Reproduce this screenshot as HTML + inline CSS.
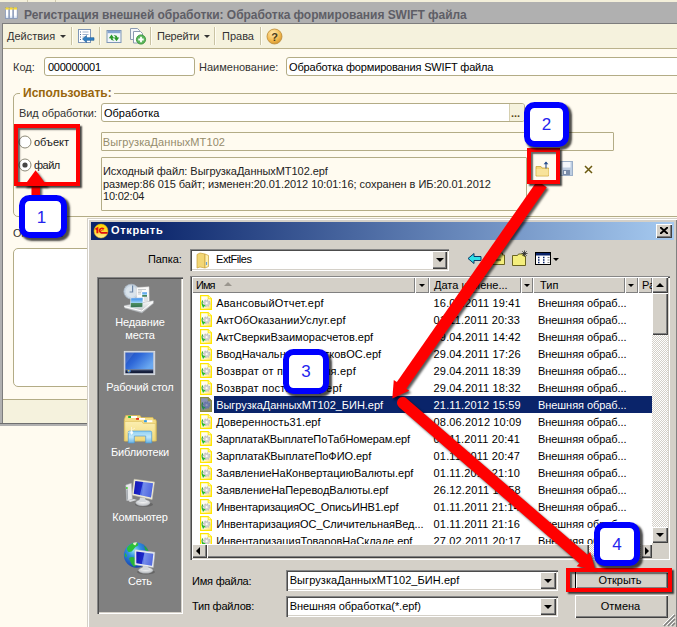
<!DOCTYPE html>
<html><head><meta charset="utf-8">
<style>
*{box-sizing:border-box;margin:0;padding:0}
html,body{width:677px;height:627px;overflow:hidden;background:#fffbf0}
body{font-family:"Liberation Sans",sans-serif;font-size:11px;color:#000;position:relative}
.a{position:absolute;white-space:nowrap}
.t{position:absolute;white-space:nowrap;line-height:13px;height:13px}
/* 1C form */
#top{left:0;top:0;width:677px;height:2px;background:#f3efda}
#tbar{left:0;top:2px;width:677px;height:21px;background:#b0b0b0}
#tbarb{left:0;top:23px;width:677px;height:1px;background:#7d7d7d}
#tool{left:3px;top:24px;width:674px;height:24px;background:#f5f2dd}
#toolb{left:3px;top:48px;width:674px;height:1px;background:#bab28c}
#lb1{left:0;top:3px;width:2px;height:422px;background:#b0b0b0}
#lb2{left:2px;top:23px;width:1px;height:401px;background:#7d7d7d}
.sep{position:absolute;top:27px;width:1px;height:18px;background:#c9c3a3;box-shadow:1px 0 0 #fffdf3}
.inp{position:absolute;border:1px solid #b3ac86;border-radius:3px;background:#fff}
.ro{background:#fffbf0}
.gl{position:absolute;background:#b3ac86}
/* dialog */
#dlg{left:87px;top:218px;width:591px;height:425px;background:#d4d0c8;box-shadow:inset 1px 1px 0 #d4d0c8,inset 2px 2px 0 #fff,inset -1px -1px 0 #404040,inset -2px -2px 0 #808080}
#dt{left:91px;top:222px;width:583px;height:18px;background:linear-gradient(90deg,#0a246a 0%,#0a246a 8%,#a6caf0 100%)}
.sunk{position:absolute;box-shadow:inset 1px 1px 0 #868686,inset 2px 2px 0 #4c4c4c,inset -1px -1px 0 #fff,inset -2px -2px 0 #d4d0c8}
.btn{position:absolute;background:#d4d0c8;box-shadow:inset 1px 1px 0 #fff,inset -1px -1px 0 #404040,inset -2px -2px 0 #808080}
.hd{position:absolute;background:#d4d0c8;top:277px;height:16px;box-shadow:inset 1px 1px 0 #fff,inset -1px -1px 0 #808080}
.w{color:#fff}
.dn{position:absolute;width:0;height:0;border-left:4px solid transparent;border-right:4px solid transparent;border-top:4px solid #000}
.dns{position:absolute;width:0;height:0;border-left:3px solid transparent;border-right:3px solid transparent;border-top:3px solid #000}
/* annotations */
.rb{position:absolute;border:4.500px solid #f00;box-shadow:2px 2px 1.500px rgba(0,0,0,.7),inset 2px 2px 1.500px rgba(0,0,0,.6)}
.co{position:absolute;border:6px solid #00f;border-radius:10.500px;background:#fff;box-shadow:2.500px 2.500px 2px rgba(0,0,0,.7);color:#2424ee;font-size:17px;text-align:center}
</style></head><body>

<!-- ===== 1C form ===== -->
<div class="a" id="top"></div><div class="a" style="left:27px;top:0;width:1px;height:2px;background:#cfc9ae"></div><div class="a" style="left:55px;top:0;width:1px;height:2px;background:#cfc9ae"></div>
<div class="a" id="tbar"></div>
<div class="a" id="tbarb"></div>
<div class="a" id="tool"></div>
<div class="a" id="toolb"></div>
<div class="a" id="lb1"></div>
<div class="a" id="lb2"></div>

<div class="t" style="left:24px;top:9px;font-weight:bold;font-size:12px;color:#5e5e66;letter-spacing:-0.04px">Регистрация внешней обработки: Обработка формирования SWIFT файла</div>

<div class="t" style="left:7px;top:30px;color:#333">Действия</div>
<div class="t" style="left:157px;top:30px;color:#333;letter-spacing:-0.2px">Перейти</div>
<div class="t" style="left:222px;top:30px;color:#333">Права</div>

<!--FORM-START-->
<!-- toolbar bits -->
<div class="dns" style="left:60px;top:35px;border-top-color:#333"></div>
<div class="dns" style="left:204px;top:35px;border-top-color:#333"></div>
<div class="sep" style="left:71px"></div>
<div class="sep" style="left:99px"></div>
<div class="sep" style="left:150px"></div>
<div class="sep" style="left:214px"></div>
<div class="sep" style="left:260px"></div>
<svg class="a" style="left:77px;top:28px" width="18" height="17" viewBox="0 0 18 17">
 <rect x="1.5" y="1.5" width="12" height="13" fill="#fff" stroke="#7f97b8"/>
 <path d="M3 4h1M3 6.5h1M3 9h1M3 11.500h1" stroke="#4a6a9a"/>
 <path d="M5.500 4h6M5.500 6.500h6M5.500 9h3" stroke="#9fb2cc"/>
 <path d="M5.500 11l4-3.500v2.200h7.500v2.600h-7.500v2.200z" fill="#2f7fc4" stroke="#1c5a94" stroke-width=".6"/>
</svg>
<svg class="a" style="left:106px;top:30px" width="16" height="13" viewBox="0 0 16 13">
 <rect x="1" y=".5" width="14" height="12" fill="#f2f6fa" stroke="#7f97b8"/>
 <rect x="1.500" y="1" width="13" height="2.200" fill="#86a6d0"/>
 <path d="M2.800 8.200l2.700-3.600 2.700 3.600h-1.700q.2 1.800 2 2.200-3.600.6-4-2.200z" fill="#2a9a2a"/>
 <path d="M13.200 7.600l-2.700 3.600-2.700-3.600h1.700q-.2-1.800-2-2.200 3.600-.6 4 2.200z" fill="#2a9a2a"/>
</svg>
<svg class="a" style="left:129px;top:27px" width="18" height="18" viewBox="0 0 18 18">
 <path d="M1.500 1.500h7l2 2v9h-9z" fill="#f4f6f9" stroke="#8c9bb0"/>
 <path d="M4.500 4.500h7l2 2v9.500h-9z" fill="#fff" stroke="#8c9bb0"/>
 <circle cx="12" cy="12.500" r="4.600" fill="#5cb85c" stroke="#2f8a2f" stroke-width=".8"/>
 <path d="M12 9.800v5.400M9.300 12.500h5.400" stroke="#fff" stroke-width="1.800"/>
</svg>
<svg class="a" style="left:266px;top:28px" width="17" height="17" viewBox="0 0 17 17">
 <defs><radialGradient id="hg" cx=".4" cy=".3" r=".8"><stop offset="0" stop-color="#ffe9b0"/><stop offset=".6" stop-color="#f2b84c"/><stop offset="1" stop-color="#c98a2a"/></radialGradient></defs>
 <circle cx="8.500" cy="8.500" r="7.500" fill="url(#hg)" stroke="#b98a3a" stroke-width=".8"/>
 <text x="8.500" y="12.500" font-family="Liberation Sans" font-size="11" font-weight="bold" text-anchor="middle" fill="#4a3a1a">?</text>
</svg>
<!-- title icon -->
<svg class="a" style="left:5px;top:7px" width="13" height="12" viewBox="0 0 13 12">
 <defs><linearGradient id="tcol" x1="0" y1="0" x2="0" y2="1"><stop offset="0" stop-color="#fff"/><stop offset=".7" stop-color="#fff"/><stop offset="1" stop-color="#cfe0f4"/></linearGradient></defs>
 <rect x=".4" y=".4" width="3.400" height="11" fill="url(#tcol)" stroke="#7a8eb4" stroke-width=".7"/>
 <rect x="4.400" y=".4" width="3.400" height="11" fill="url(#tcol)" stroke="#7a8eb4" stroke-width=".7"/>
 <rect x="8.400" y=".4" width="3.800" height="11" fill="url(#tcol)" stroke="#7a8eb4" stroke-width=".7"/>
 <rect x=".4" y=".4" width="3.400" height="2.200" fill="#f6d632"/><rect x="4.400" y=".4" width="3.400" height="2.200" fill="#f6d632"/><rect x="8.400" y=".4" width="3.800" height="2.200" fill="#f6d632"/>
</svg>

<!-- row 1 -->
<div class="t" style="left:13px;top:61px;color:#333">Код:</div>
<div class="inp" style="left:44px;top:57px;width:151px;height:19px"></div>
<div class="t" style="left:48px;top:61px;letter-spacing:-.25px">000000001</div>
<div class="t" style="left:199px;top:61px;color:#333">Наименование:</div>
<div class="inp" style="left:286px;top:57px;width:400px;height:19px"></div>
<div class="t" style="left:289px;top:61px;letter-spacing:-.16px">Обработка формирования SWIFT файла</div>

<!-- group box -->
<div class="a" style="left:13px;top:93px;width:680px;height:124px;border:1px solid #b3ac86;border-radius:5px"></div>
<div class="a" style="left:20px;top:90px;width:94px;height:6px;background:#fffbf0"></div>
<div class="t" style="left:23px;top:86px;height:14px;line-height:14px;font-weight:bold;font-size:12px;color:#98660c">Использовать:</div>
<div class="t" style="left:19px;top:107px;color:#333;letter-spacing:-.08px">Вид обработки:</div>
<div class="inp" style="left:101px;top:103px;width:424px;height:19px"></div>
<div class="a" style="left:509px;top:104px;width:15px;height:17px;background:#f5f2dd;border-left:1px solid #d6d0b0;border-radius:0 2px 2px 0"></div>
<div class="t" style="left:511px;top:107px;color:#5a4a1a;font-weight:bold;letter-spacing:0px">...</div>
<div class="t" style="left:104px;top:107px">Обработка</div>

<!-- radios -->
<svg class="a" style="left:18px;top:135px" width="14" height="14" viewBox="0 0 14 14"><circle cx="7" cy="7" r="6" fill="#fff" stroke="#8d8a78" stroke-width="1"/></svg>
<div class="t" style="left:34px;top:136px;color:#222">объект</div>
<svg class="a" style="left:18px;top:158px" width="14" height="14" viewBox="0 0 14 14"><circle cx="7" cy="7" r="6" fill="#fff" stroke="#8d8a78" stroke-width="1"/><circle cx="7" cy="7" r="2.600" fill="#444"/></svg>
<div class="t" style="left:34px;top:159px;color:#222;letter-spacing:-.5px">файл</div>

<div class="inp ro" style="left:101px;top:132px;width:513px;height:19px;border-radius:1px"></div>
<div class="t" style="left:102.700px;top:136px;color:#958c6c;letter-spacing:.11px">ВыгрузкаДанныхМТ102</div>

<div class="inp ro" style="left:101px;top:157px;width:426px;height:54px;border-radius:1px"></div>
<div class="t" style="left:103px;top:165px;color:#222;letter-spacing:-0.05px">Исходный файл: ВыгрузкаДанныхМТ102.epf</div>
<div class="t" style="left:103px;top:178px;color:#222;letter-spacing:-0.06px">размер:86 015 байт; изменен:20.01.2012 10:01:16; сохранен в ИБ:20.01.2012</div>
<div class="t" style="left:103px;top:190px;color:#222;letter-spacing:-.2px">10:02:04</div>

<!-- icons right of info -->
<svg class="a" style="left:535px;top:160px" width="16" height="17" viewBox="0 0 16 17">
 <path d="M1 6.500h5l1 1.500h6.500v8h-12.500z" fill="#f3d779" stroke="#c9a53a" stroke-width=".8"/>
 <path d="M1.500 9h12v6.500h-12z" fill="#f8e39a"/>
 <path d="M11 8.500v-6.500" fill="none" stroke="#2a4f8e" stroke-width="1.100"/><path d="M8.600 4.300l2.400-2.800 2.400 2.800z" fill="#2a4f8e"/>
</svg>
<svg class="a" style="left:559.500px;top:161px" width="13" height="15" viewBox="0 0 13 15">
 <rect x=".5" y=".5" width="12" height="14" fill="#a9c0de" stroke="#7c96bb" opacity=".75"/>
 <rect x="2.500" y="1" width="8" height="5.500" fill="#f4f7fb"/>
 <rect x="3" y="9" width="7" height="5" fill="#5c7192" opacity=".7"/>
 <rect x="4" y="10" width="2" height="3" fill="#e8eef5"/>
</svg>
<svg class="a" style="left:584px;top:165px" width="9" height="9" viewBox="0 0 9 9"><path d="M1 1l7 7M8 1l-7 7" stroke="#6b5a10" stroke-width="1.500"/></svg>

<!-- lower -->
<div class="t" style="left:13px;top:227px;color:#333">Описание</div>
<div class="inp" style="left:13px;top:248px;width:680px;height:139px;border-radius:5px"></div>
<div class="a" style="left:3px;top:399px;width:90px;height:1px;background:#b3ac86"></div>
<div class="a" style="left:3px;top:400px;width:90px;height:23px;background:#f5f2dd"></div>
<div class="a" style="left:0px;top:423px;width:90px;height:1px;background:#6f6f6f"></div>
<div class="a" style="left:0px;top:424px;width:90px;height:2px;background:#b0b0b0"></div>
<!--FORM-END-->

<!-- ===== dialog ===== -->
<div class="a" id="dlg"></div>
<div class="a" id="dt"></div>
<svg width="0" height="0" style="position:absolute"><defs>
<linearGradient id="pg" x1="0" y1="0" x2="1" y2="1"><stop offset="0" stop-color="#fff"/><stop offset=".55" stop-color="#fffbe0"/><stop offset="1" stop-color="#ffe060"/></linearGradient>
<linearGradient id="pgs" x1="0" y1="0" x2=".6" y2="1"><stop offset="0" stop-color="#8494c4"/><stop offset=".6" stop-color="#8890a8"/><stop offset="1" stop-color="#94945c"/></linearGradient>
<symbol id="fi" viewBox="0 0 12 15">
 <path d="M.6 .6h7.600l3.200 3.200v10.600h-10.800z" fill="url(#pg)" stroke="#ffe600" stroke-width="1.200"/>
 <path d="M8.200 .6v3.200h3.200" fill="#fff8b0" stroke="#ffe600" stroke-width=".9"/>
 <circle cx="6.600" cy="8.200" r="3" fill="#d4d4d4" stroke="#bcbcbc" stroke-width="1.700" stroke-dasharray="1.250 1.100"/>
 <circle cx="6.600" cy="8.200" r="2.600" fill="#d0d0d0"/>
 <circle cx="6.600" cy="8.200" r="1.100" fill="#fffff0"/>
 <path d="M2.600 5.600q-1.300 2.500.2 5" fill="none" stroke="#22a822" stroke-width="1.100"/>
 <path d="M1.600 9.300l4 .9-2.600 2.900z" fill="#2cc02c"/>
</symbol>
<symbol id="fis" viewBox="0 0 12 15">
 <path d="M.6 .6h7.600l3.200 3.200v10.600h-10.800z" fill="url(#pgs)" stroke="#8c8c3c" stroke-width="1.200"/>
 <path d="M8.200 .6v3.200h3.200" fill="#8a8a58" stroke="#8c8c3c" stroke-width=".9"/>
 <circle cx="6.600" cy="8.200" r="3" fill="#6c7aac" stroke="#6470a0" stroke-width="1.700" stroke-dasharray="1.250 1.100"/>
 <circle cx="6.600" cy="8.200" r="2.600" fill="#6c7aac"/>
 <circle cx="6.600" cy="8.200" r="1.100" fill="#9aa0b0"/>
 <path d="M2.600 5.600q-1.300 2.500.2 5" fill="none" stroke="#1c7c3c" stroke-width="1.100"/>
 <path d="M1.600 9.300l4 .9-2.600 2.900z" fill="#22904c"/>
</symbol>
</defs></svg>
<svg class="a" style="left:93px;top:223px" width="16" height="16" viewBox="0 0 16 16"><defs><linearGradient id="c1" x1="0" y1="0" x2="0" y2="1"><stop offset="0" stop-color="#ffd400"/><stop offset=".55" stop-color="#ffdc30"/><stop offset="1" stop-color="#fff0a0"/></linearGradient></defs><circle cx="8" cy="8" r="7" fill="url(#c1)" stroke="#e8b400" stroke-width=".5"/><path d="M2.500 6.400l1.900-1.100v5" fill="none" stroke="#e01010" stroke-width="1.900"/><path d="M10.800 6.200a2.300 2.300 0 1 0-2.300 3.600h6" fill="none" stroke="#e01010" stroke-width="1.700"/><path d="M10.300 7.300a1.200 1.200 0 0 0-2 .6" fill="none" stroke="#e01010" stroke-width=".8"/></svg>
<div class="t w" style="left:111px;top:224px;font-weight:bold;letter-spacing:.66px">Открыть</div>
<div class="btn" style="left:656px;top:224px;width:16px;height:14px"></div>
<svg class="a" style="left:660px;top:227px" width="8" height="7" viewBox="0 0 8 7"><path d="M0 0l8 7M8 0l-8 7" stroke="#000" stroke-width="2"/></svg>
<div class="t" style="left:148px;top:253px;letter-spacing:-.1px">Папка:</div>
<div class="sunk" style="left:190px;top:249px;width:259px;height:22px;background:#fff"></div>
<div class="btn" style="left:432px;top:251px;width:15px;height:18px"></div>
<div class="dn" style="left:436px;top:258px"></div>
<svg class="a" style="left:196px;top:252px" width="14" height="17" viewBox="0 0 14 17"><path d="M1 2.500l3-1.500 5 1v14l-5-1-3 1z" fill="#f2d675" stroke="#c8a23a" stroke-width=".7"/><path d="M9 2v14l3.500-1.500v-11z" fill="#fff0b0" stroke="#c8a23a" stroke-width=".7"/><path d="M10.500 10v3" stroke="#6aa0d8" stroke-width="1.200"/></svg>
<div class="t" style="left:216px;top:253px;letter-spacing:-.45px">ExtFiles</div>
<svg class="a" style="left:467px;top:252px" width="15" height="13" viewBox="0 0 15 13"><path d="M1 6.500l6-5v3h7v4h-7v3z" fill="#2fe0e8" stroke="#0a3a6a" stroke-width="1"/></svg>
<svg class="a" style="left:490px;top:251px" width="15" height="14" viewBox="0 0 15 14"><path d="M.5 3.500h5l1-1.500h6v2h2v9.500h-14z" fill="#f4ee7c" stroke="#6a6420" stroke-width="1"/><path d="M4 9h7" stroke="#3a3a10" stroke-width="1.200"/></svg>
<svg class="a" style="left:512px;top:248px" width="17" height="18" viewBox="0 0 17 18"><path d="M.5 7.500h5l1-1.500h5v2h2v9.500h-13z" fill="#f4ee7c" stroke="#6a6420" stroke-width="1"/><path d="M12.500 2.500v6M9.500 5.500h6M10.300 3.300l4.400 4.400M14.700 3.300l-4.400 4.400" stroke="#2a2a2a" stroke-width=".8"/></svg>
<svg class="a" style="left:535px;top:252px" width="17" height="13" viewBox="0 0 17 13"><rect x=".5" y=".5" width="15" height="12" fill="#fff" stroke="#000"/><rect x="1" y="1" width="14" height="2.500" fill="#0a246a"/><path d="M3 5.500h3M3 8h3M3 10.500h3M8 5.500h3M8 8h3M8 10.500h3" stroke="#0a246a" stroke-width="1.500" stroke-dasharray="1.500 1.500"/><path d="M12.500 5.500h2M12.500 8h2M12.500 10.500h2" stroke="#888" stroke-width="1"/></svg>
<div class="dns" style="left:553px;top:258px"></div>
<div class="sunk" style="left:97px;top:277px;width:86px;height:337px;background:#808080"></div>
<div class="t w" style="left:99px;width:82px;text-align:center;top:316px;letter-spacing:-.15px">Недавние</div>
<div class="t w" style="left:99px;width:82px;text-align:center;top:329px;letter-spacing:-.15px">места</div>
<div class="t w" style="left:99px;width:82px;text-align:center;top:381px;letter-spacing:-.15px">Рабочий стол</div>
<div class="t w" style="left:99px;width:82px;text-align:center;top:446px;letter-spacing:-.15px">Библиотеки</div>
<div class="t w" style="left:99px;width:82px;text-align:center;top:511px;letter-spacing:-.15px">Компьютер</div>
<div class="t w" style="left:99px;width:82px;text-align:center;top:575px;letter-spacing:-.15px">Сеть</div>
<svg class="a" style="left:115px;top:278px" width="50" height="50" viewBox="115 278 50 50">
 <defs>
  <linearGradient id="sky" x1="0" y1="0" x2="0" y2="1"><stop offset="0" stop-color="#2f86e8"/><stop offset=".5" stop-color="#9fd4f4"/><stop offset=".55" stop-color="#4f8f5f"/><stop offset="1" stop-color="#2f6f4f"/></linearGradient>
  <linearGradient id="tray" x1="0" y1="0" x2="0" y2="1"><stop offset="0" stop-color="#fdfdfd"/><stop offset="1" stop-color="#b8bcc0"/></linearGradient>
 </defs>
 <circle cx="131.300" cy="291.600" r="7.400" fill="#c9d6e2" stroke="#a9b6c4" stroke-width=".8"/>
 <circle cx="131.300" cy="291.600" r="5.600" fill="#dfe8f0" opacity=".7"/>
 <path d="M132.600 285.500v6.500h-3" fill="none" stroke="#6c86a8" stroke-width="1.200"/>
 <path d="M136.500 287.600l12.500-.8.200 15.500-12.500.5z" fill="#fafafa" stroke="#d0d0d0" stroke-width=".5"/>
 <path d="M138 289.500h8M138 291h4M138 292.500h3M138 294h3M144 298h4M144 300h4" stroke="#b0b4b8" stroke-width=".7"/>
 <rect x="142.200" y="292.400" width="4.800" height="4.300" fill="url(#sky)"/>
 <path d="M124.300 305.500l28.800-4.800 .4 2.500-11.500 9.700-17.500-5z" fill="url(#tray)" stroke="#a4a8ac" stroke-width=".5"/>
 <path d="M130.800 298l12.200-.2-.3 9.500-12.400.4z" fill="url(#sky)" stroke="#e8f0f8" stroke-width=".6"/>
 <path d="M124.300 306.500l17.500 4.500 11.500-9.500" fill="none" stroke="#fff" stroke-width="1"/>
</svg>
<svg class="a" style="left:115px;top:343px" width="50" height="50" viewBox="115 343 50 50">
 <defs>
  <linearGradient id="dsk" x1="0" y1="0" x2="1" y2=".6"><stop offset="0" stop-color="#1c48b8"/><stop offset=".45" stop-color="#2f68d8"/><stop offset="1" stop-color="#6aa8f0"/></linearGradient>
  <linearGradient id="tbk" x1="0" y1="0" x2="0" y2="1"><stop offset="0" stop-color="#5a6a8a"/><stop offset=".5" stop-color="#1a2444"/><stop offset="1" stop-color="#0e1630"/></linearGradient>
 </defs>
 <rect x="124.200" y="351.300" width="30.600" height="23.400" fill="#c4cad4" stroke="#e4e8ee" stroke-width=".7"/>
 <rect x="125.400" y="352.600" width="27.800" height="16.800" fill="url(#dsk)"/>
 <path d="M125.400 352.600h9l-9 12z" fill="#fff" opacity=".12"/>
 <rect x="125.400" y="369.300" width="27.800" height="3.900" fill="url(#tbk)"/>
 <circle cx="129" cy="371" r="1.800" fill="#4a88d8"/><circle cx="128.700" cy="370.700" r=".8" fill="#f4c430"/>
</svg>
<svg class="a" style="left:115px;top:408px" width="50" height="50" viewBox="115 408 50 50">
 <defs>
  <linearGradient id="fld" x1="0" y1="0" x2="0" y2="1"><stop offset="0" stop-color="#fbeeb0"/><stop offset="1" stop-color="#f2d878"/></linearGradient>
  <linearGradient id="stn" x1="0" y1="0" x2="0" y2="1"><stop offset="0" stop-color="#8fd0f2"/><stop offset=".5" stop-color="#c4e8fa"/><stop offset="1" stop-color="#6ab4e4"/></linearGradient>
 </defs>
 <path d="M124.300 419.500l1.500-4h14.200l1.300 2h11.500l1 2h1.700l.8 1.500v20h-32z" fill="#f4dc84" stroke="#d8b84c" stroke-width=".7"/>
 <rect x="128.200" y="416" width="2.800" height="2" fill="#1cb43c"/><rect x="131" y="416" width="6" height="2" fill="#fff"/>
 <rect x="136.100" y="418" width="2.900" height="1.800" fill="#e03020"/><rect x="139" y="418" width="6" height="1.800" fill="#fff"/>
 <path d="M124.800 421.500h17l1.500 2h12v17.500h-30.500z" fill="url(#fld)" stroke="#dcc060" stroke-width=".6"/>
 <rect x="144.100" y="420.200" width="2.800" height="2" fill="#2a9af0"/><rect x="146.900" y="420.200" width="5.500" height="2" fill="#fff"/>
 <path d="M128.300 443v-10.500q0-1.400 1.500-1.400h20.400q1.500 0 1.500 1.400v10.500h-6v-7h-11.400v7z" fill="url(#stn)" stroke="#4a9ad4" stroke-width=".7"/>
 <path d="M131.500 427v8M128 433l7-5" stroke="#fff" stroke-width=".6" opacity=".9"/>
 <circle cx="131.700" cy="432.500" r="1.500" fill="#fff" opacity=".9"/>
</svg>
<svg class="a" style="left:115px;top:472px" width="50" height="50" viewBox="115 472 50 50">
 <defs>
  <linearGradient id="scr" x1="0" y1="0" x2="1" y2=".2"><stop offset="0" stop-color="#1414b4"/><stop offset=".45" stop-color="#1c28c8"/><stop offset=".5" stop-color="#5a78e8"/><stop offset="1" stop-color="#2c48d8"/></linearGradient>
  <radialGradient id="bas" cx=".5" cy=".3" r=".7"><stop offset="0" stop-color="#fff"/><stop offset="1" stop-color="#b8bcc0"/></radialGradient>
 </defs>
 <ellipse cx="144" cy="504.500" rx="9" ry="2.500" fill="#000" opacity=".2"/>
 <path d="M125.800 485l5.500-1.800 1 16-5.500 1.500z" fill="#e8eaec" stroke="#b0b4b8" stroke-width=".5"/>
 <path d="M126.300 489.500l.3 10.500 1.500-.4-.2-10.300z" fill="#a8aeb4"/>
 <circle cx="126.900" cy="488" r=".9" fill="#38d020"/>
 <path d="M128 500.500l6-1.500 3 1-7 2z" fill="#d8dadc"/>
 <ellipse cx="142.900" cy="502.700" rx="7.200" ry="3.200" fill="url(#bas)" stroke="#a8acb0" stroke-width=".4"/>
 <path d="M140 497.500h5l1 4.500h-7z" fill="#d4d8dc"/>
 <path d="M134.100 479.200l20.400 2.800-2.400 17.500-20-4.400z" fill="#f0ecd8" stroke="#c8c4b0" stroke-width=".5"/>
 <path d="M135.300 480.900l17.700 2.400-2 14.300-17.300-3.800z" fill="url(#scr)"/>
 <path d="M143.500 482l-1.500 13.600 8.800 2 2.100-14.300z" fill="#fff" opacity=".18"/>
</svg>
<svg class="a" style="left:115px;top:536px" width="50" height="50" viewBox="115 536 50 50">
 <defs>
  <radialGradient id="glb" cx=".4" cy=".3" r=".75"><stop offset="0" stop-color="#8fe4f8"/><stop offset=".35" stop-color="#2f8ee0"/><stop offset="1" stop-color="#1438a8"/></radialGradient>
 </defs>
 <ellipse cx="146" cy="572" rx="9" ry="2.500" fill="#000" opacity=".2"/>
 <circle cx="136.500" cy="555.100" r="12.600" fill="url(#glb)"/>
 <path d="M127 548q3-5 9-5.500 3 .5 2 3-3 1-4.500 4-2 3-5 2.500-2-1.500-1.500-4z" fill="#2cc038"/>
 <path d="M133 543q1.500-1 4-.8l-1.500 3q-2 .5-2.500-2.200z" fill="#e8f4c8"/>
 <path d="M144 545.500q3 2 4.500 5.500l-2 .5q-2-3-2.500-6z" fill="#28a838"/>
 <path d="M129 558q3-2 6 0 2 2.500 1.500 6-.5 3-3 2.500-3-3-4.500-8.500z" fill="#28b438"/>
 <path d="M125 553q1.500 1 2 3l-1.500 1.500q-1-2-.5-4.500z" fill="#2cb83c"/>
 <ellipse cx="145.700" cy="570.300" rx="7.200" ry="3" fill="url(#bas)" stroke="#a8acb0" stroke-width=".4"/>
 <path d="M143 566h5l1 4h-7z" fill="#d4d8dc"/>
 <path d="M134.900 549.600l20 2.700-1.600 15.200-18.400-2.800z" fill="#eceef0" stroke="#b8bcc4" stroke-width=".5"/>
 <path d="M136.300 551.400l17 2.300-1.300 12-15.700-2.400z" fill="url(#scr)"/>
 <path d="M144.500 552.500l-1.200 11.800 8.700 1.400 1.300-12z" fill="#fff" opacity=".2"/>
</svg>

<div class="sunk" style="left:190px;top:276px;width:480px;height:284px;background:#fff"></div>
<div class="hd" style="left:192px;width:223px"></div>
<div class="hd" style="left:415px;width:14px"></div>
<div class="hd" style="left:429px;width:92px"></div>
<div class="hd" style="left:521px;width:12px"></div>
<div class="hd" style="left:533px;width:92px"></div>
<div class="hd" style="left:625px;width:13px"></div>
<div class="hd" style="left:638px;width:14px"></div>
<div class="t" style="left:196px;top:279px;letter-spacing:-1px">Имя</div>
<div class="a" style="left:224px;top:282px;width:0;height:0;border-left:4px solid transparent;border-right:4px solid transparent;border-bottom:4px solid #9a968e"></div>
<div class="t" style="left:434px;top:279px">Дата измене...</div>
<div class="t" style="left:540px;top:279px">Тип</div>
<div class="t" style="left:642px;top:279px;width:10px;overflow:hidden">Ра</div>
<div class="dns" style="left:419px;top:284px"></div>
<div class="dns" style="left:524px;top:284px"></div>
<div class="dns" style="left:628px;top:284px"></div>
<div class="a" style="left:192px;top:294px;width:460px;height:250px;overflow:hidden">
<svg class="a" style="left:8px;top:1px" width="12" height="15"><use href="#fi"/></svg>
<div class="t" style="left:24.2px;top:3px;letter-spacing:0.187px">АвансовыйОтчет.epf</div>
<div class="t" style="left:241.6px;top:3px;letter-spacing:.15px">16.09.2011 19:41</div>
<div class="t" style="left:346px;top:3px;letter-spacing:-.06px">Внешняя обраб...</div>
<svg class="a" style="left:8px;top:18px" width="12" height="15"><use href="#fi"/></svg>
<div class="t" style="left:24.2px;top:20px;letter-spacing:0.164px">АктОбОказанииУслуг.epf</div>
<div class="t" style="left:241.6px;top:20px;letter-spacing:.15px">01.11.2011 20:33</div>
<div class="t" style="left:346px;top:20px;letter-spacing:-.06px">Внешняя обраб...</div>
<svg class="a" style="left:8px;top:35px" width="12" height="15"><use href="#fi"/></svg>
<div class="t" style="left:24.2px;top:37px;letter-spacing:0.007px">АктСверкиВзаиморасчетов.epf</div>
<div class="t" style="left:241.6px;top:37px;letter-spacing:.15px">29.04.2011 14:42</div>
<div class="t" style="left:346px;top:37px;letter-spacing:-.06px">Внешняя обраб...</div>
<svg class="a" style="left:8px;top:52px" width="12" height="15"><use href="#fi"/></svg>
<div class="t" style="left:24.2px;top:54px;letter-spacing:0.027px">ВводНачальныхОстатковОС.epf</div>
<div class="t" style="left:241.6px;top:54px;letter-spacing:.15px">29.04.2011 17:26</div>
<div class="t" style="left:346px;top:54px;letter-spacing:-.06px">Внешняя обраб...</div>
<svg class="a" style="left:8px;top:69px" width="12" height="15"><use href="#fi"/></svg>
<div class="t" style="left:24.2px;top:71px;letter-spacing:0.232px">Возврат от покупателя.epf</div>
<div class="t" style="left:241.6px;top:71px;letter-spacing:.15px">29.04.2011 18:39</div>
<div class="t" style="left:346px;top:71px;letter-spacing:-.06px">Внешняя обраб...</div>
<svg class="a" style="left:8px;top:86px" width="12" height="15"><use href="#fi"/></svg>
<div class="t" style="left:24.2px;top:88px;letter-spacing:0.189px">Возврат поставщику.epf</div>
<div class="t" style="left:241.6px;top:88px;letter-spacing:.15px">29.04.2011 18:32</div>
<div class="t" style="left:346px;top:88px;letter-spacing:-.06px">Внешняя обраб...</div>
<div class="a" style="left:22px;top:102px;width:438px;height:17px;background:#0a246a"></div>
<svg class="a" style="left:8px;top:103px" width="12" height="15"><use href="#fis"/></svg>
<div class="t w" style="left:24.2px;top:105px;letter-spacing:-0.039px">ВыгрузкаДанныхМТ102_БИН.epf</div>
<div class="t w" style="left:241.6px;top:105px;letter-spacing:.15px">21.11.2012 15:59</div>
<div class="t w" style="left:346px;top:105px;letter-spacing:-.06px">Внешняя обраб...</div>
<svg class="a" style="left:8px;top:120px" width="12" height="15"><use href="#fi"/></svg>
<div class="t" style="left:24.2px;top:122px;letter-spacing:0.090px">Доверенность31.epf</div>
<div class="t" style="left:241.6px;top:122px;letter-spacing:.15px">08.06.2012 10:09</div>
<div class="t" style="left:346px;top:122px;letter-spacing:-.06px">Внешняя обраб...</div>
<svg class="a" style="left:8px;top:137px" width="12" height="15"><use href="#fi"/></svg>
<div class="t" style="left:24.2px;top:139px;letter-spacing:-0.120px">ЗарплатаКВыплатеПоТабНомерам.epf</div>
<div class="t" style="left:241.6px;top:139px;letter-spacing:.15px">01.11.2011 20:41</div>
<div class="t" style="left:346px;top:139px;letter-spacing:-.06px">Внешняя обраб...</div>
<svg class="a" style="left:8px;top:154px" width="12" height="15"><use href="#fi"/></svg>
<div class="t" style="left:24.2px;top:156px;letter-spacing:-0.052px">ЗарплатаКВыплатеПоФИО.epf</div>
<div class="t" style="left:241.6px;top:156px;letter-spacing:.15px">01.11.2011 20:47</div>
<div class="t" style="left:346px;top:156px;letter-spacing:-.06px">Внешняя обраб...</div>
<svg class="a" style="left:8px;top:171px" width="12" height="15"><use href="#fi"/></svg>
<div class="t" style="left:24.2px;top:173px;letter-spacing:0.023px">ЗаявлениеНаКонвертациюВалюты.epf</div>
<div class="t" style="left:241.6px;top:173px;letter-spacing:.15px">01.11.2011 21:10</div>
<div class="t" style="left:346px;top:173px;letter-spacing:-.06px">Внешняя обраб...</div>
<svg class="a" style="left:8px;top:188px" width="12" height="15"><use href="#fi"/></svg>
<div class="t" style="left:24.2px;top:190px;letter-spacing:-0.021px">ЗаявлениеНаПереводВалюты.epf</div>
<div class="t" style="left:241.6px;top:190px;letter-spacing:.15px">26.12.2011 10:58</div>
<div class="t" style="left:346px;top:190px;letter-spacing:-.06px">Внешняя обраб...</div>
<svg class="a" style="left:8px;top:205px" width="12" height="15"><use href="#fi"/></svg>
<div class="t" style="left:24.2px;top:207px;letter-spacing:-0.160px">ИнвентаризацияОС_ОписьИНВ1.epf</div>
<div class="t" style="left:241.6px;top:207px;letter-spacing:.15px">01.11.2011 21:14</div>
<div class="t" style="left:346px;top:207px;letter-spacing:-.06px">Внешняя обраб...</div>
<svg class="a" style="left:8px;top:222px" width="12" height="15"><use href="#fi"/></svg>
<div class="t" style="left:24.2px;top:224px;letter-spacing:-0.066px">ИнвентаризацияОС_СличительнаяВед...</div>
<div class="t" style="left:241.6px;top:224px;letter-spacing:.15px">01.11.2011 21:16</div>
<div class="t" style="left:346px;top:224px;letter-spacing:-.06px">Внешняя обраб...</div>
<svg class="a" style="left:8px;top:239px" width="12" height="15"><use href="#fi"/></svg>
<div class="t" style="left:24.2px;top:241px;letter-spacing:-0.024px">ИнвентаризацияТоваровНаСкладе.epf</div>
<div class="t" style="left:241.6px;top:241px;letter-spacing:.15px">27.02.2011 20:17</div>
<div class="t" style="left:346px;top:241px;letter-spacing:-.06px">Внешняя обраб...</div>
</div>
<div class="a" style="left:652px;top:277px;width:16px;height:266px;background-image:linear-gradient(45deg,#fff 25%,transparent 25%,transparent 75%,#fff 75%),linear-gradient(45deg,#fff 25%,transparent 25%,transparent 75%,#fff 75%);background-size:2px 2px;background-position:0 0,1px 1px;background-color:#d4d0c8"></div>
<div class="btn" style="left:652px;top:277px;width:16px;height:16px"></div>
<div class="a" style="left:656px;top:283px;width:0;height:0;border-left:4px solid transparent;border-right:4px solid transparent;border-bottom:4px solid #000"></div>
<div class="btn" style="left:652px;top:293px;width:16px;height:42px"></div>
<div class="btn" style="left:652px;top:527px;width:16px;height:16px"></div>
<div class="dn" style="left:656px;top:533px"></div>
<div class="a" style="left:192px;top:544px;width:460px;height:14px;background-image:linear-gradient(45deg,#fff 25%,transparent 25%,transparent 75%,#fff 75%),linear-gradient(45deg,#fff 25%,transparent 25%,transparent 75%,#fff 75%);background-size:2px 2px;background-position:0 0,1px 1px;background-color:#d4d0c8"></div>
<div class="btn" style="left:192px;top:544px;width:15px;height:14px"></div>
<div class="a" style="left:196px;top:547px;width:0;height:0;border-top:4px solid transparent;border-bottom:4px solid transparent;border-right:4px solid #000"></div>
<div class="btn" style="left:207px;top:544px;width:382px;height:14px"></div>
<div class="btn" style="left:641px;top:544px;width:11px;height:14px"></div>
<div class="a" style="left:645px;top:547px;width:0;height:0;border-top:4px solid transparent;border-bottom:4px solid transparent;border-left:4px solid #000"></div>
<div class="a" style="left:652px;top:543px;width:16px;height:15px;background:#d4d0c8"></div>
<div class="t" style="left:192px;top:575px;letter-spacing:-.2px">Имя файла:</div>
<div class="t" style="left:192px;top:600px;letter-spacing:-.2px">Тип файлов:</div>
<div class="sunk" style="left:286px;top:570px;width:272px;height:21px;background:#fff"></div>
<div class="t" style="left:289.700px;top:574px;letter-spacing:.07px">ВыгрузкаДанныхМТ102_БИН.epf</div>
<div class="btn" style="left:540px;top:572px;width:16px;height:17px"></div><div class="dn" style="left:544px;top:579px"></div>
<div class="sunk" style="left:286px;top:596px;width:272px;height:21px;background:#fff"></div>
<div class="t" style="left:289.700px;top:600px;letter-spacing:-.05px">Внешняя обработка(*.epf)</div>
<div class="btn" style="left:540px;top:598px;width:16px;height:17px"></div><div class="dn" style="left:544px;top:605px"></div>
<div class="a" style="left:575px;top:571px;width:94px;height:19px;background:#000"></div>
<div class="btn" style="left:576px;top:572px;width:92px;height:17px"></div>
<div class="t" style="left:572px;width:96px;text-align:center;top:574px">Открыть</div>
<div class="btn" style="left:575px;top:595px;width:93px;height:23px"></div>
<div class="t" style="left:573px;width:95px;text-align:center;top:600px">Отмена</div>
<svg class="a" style="left:663px;top:614px" width="13" height="13" viewBox="0 0 13 13"><path d="M12 1l-11 11M12 5l-7 7M12 9l-3 3" stroke="#808080" stroke-width="1.500"/><path d="M13 1l-12 12M13 5l-8 8M13 9l-4 4" stroke="#fff" stroke-width="1" transform="translate(-1.500 -1.500)"/></svg>

<!-- ===== annotations ===== -->
<svg class="a" style="left:0;top:0;filter:drop-shadow(2px 2px 1px rgba(0,0,0,.65))" width="677" height="627" viewBox="0 0 677 627">
<line x1="542.00" y1="184.00" x2="400.94" y2="386.22" stroke="#f00" stroke-width="11.6" stroke-linecap="butt"/><polygon points="392.30,398.60 393.80,380.02 409.22,390.77" fill="#f00"/>

<line x1="402.8" y1="402.8" x2="583.4" y2="559.0" stroke="#f00" stroke-width="11.6" stroke-linecap="round"/>
<polygon points="595.3,569.7 576.6,566.2 590.2,551.8" fill="#f00"/>
<polygon points="35.6,170.3 24,186 47.3,186" fill="#f00"/><rect x="31.5" y="185" width="8.5" height="12" fill="#f00"/>
</svg>
<div class="rb" style="left:14px;top:124px;width:66px;height:62px"></div>
<div class="rb" style="left:527px;top:148px;width:33px;height:36px"></div>
<div class="rb" style="left:566px;top:568px;width:106px;height:24px"></div>
<div class="co" style="left:19px;top:195px;width:48px;height:43px;line-height:31px;padding-right:3px;line-height:34px">1</div>
<div class="co" style="left:524px;top:102px;width:45px;height:45px;line-height:33px;line-height:34px">2</div>
<div class="co" style="left:283px;top:349px;width:46px;height:45px;line-height:33px;line-height:34px">3</div>
<div class="co" style="left:594px;top:522px;width:46px;height:44px;line-height:32px;line-height:33px">4</div>
</body></html>
